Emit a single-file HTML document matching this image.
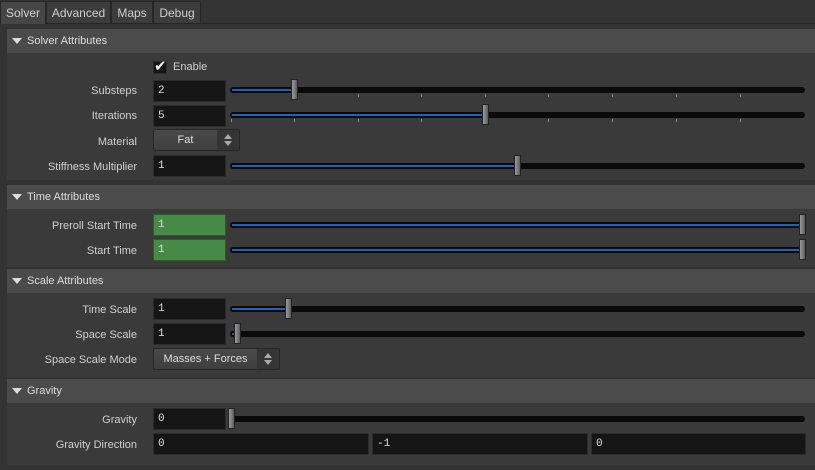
<!DOCTYPE html><html><head><style>
*{margin:0;padding:0;box-sizing:border-box}
body{width:815px;height:470px;background:#333;font-family:"Liberation Sans","DejaVu Sans",sans-serif;font-size:11px;color:#d0d0d0;position:relative;overflow:hidden}
.a{position:absolute}
.tab{position:absolute;top:1px;height:22px;background:#3c3c3c;border:1px solid #262626;border-bottom:none;line-height:22px;text-align:center;font-size:12px;color:#cfcfcf}
.hdr{position:absolute;left:7px;width:808px;height:24px;background:#4b4b4b;line-height:25px;padding-left:20px;font-size:11px;color:#ddd}
.hdr:before{content:"";position:absolute;left:5px;top:9px;border-left:5px solid transparent;border-right:5px solid transparent;border-top:6px solid #ddd}
.body{position:absolute;left:7px;width:808px;background:#3a3a3a}
.lbl{position:absolute;width:130px;left:7px;text-align:right;height:14px;line-height:16px}
.fld{position:absolute;left:153px;width:73px;height:22px;background:#151515;border:1px solid #2b2b2b;line-height:21px;padding-left:4px;font-family:"Liberation Mono","DejaVu Sans Mono",monospace;font-size:11px;color:#ddd}
.g{background:#478a47;border-color:#2e5a2e}
.trk{position:absolute;left:230px;width:575px;height:6px;background:#0a0a0a;border-radius:3px}
.fill{position:absolute;left:2px;top:2px;height:2px;background:#1f63b8}
.th{position:absolute;width:7px;height:21px;background:linear-gradient(90deg,#9a9a9a,#777 60%,#5a5a5a);border:1px solid #222}
.tick{position:absolute;width:1px;height:3px;background:#888}
.menu{position:absolute;left:153px;height:22px;background:linear-gradient(#4a4a4a,#3e3e3e);border:1px solid #262626;border-radius:2px;line-height:21px;text-align:center;color:#ddd}
.arr{position:absolute;right:0;top:0;width:22px;height:20px;background:#353535}
.arr:before{content:"";position:absolute;left:7px;top:4px;border-left:4px solid transparent;border-right:4px solid transparent;border-bottom:5px solid #aaa}
.arr:after{content:"";position:absolute;left:7px;top:11px;border-left:4px solid transparent;border-right:4px solid transparent;border-top:5px solid #aaa}
</style></head><body>
<div class="a" style="left:0;top:23px;width:815px;height:1px;background:#262626"></div>
<div class="tab" style="left:0;width:46px;background:#464646;height:23px">Solver</div>
<div class="tab" style="left:46px;width:65px">Advanced</div>
<div class="tab" style="left:111px;width:42px">Maps</div>
<div class="tab" style="left:153px;width:48px">Debug</div>

<div class="hdr" style="top:29px">Solver Attributes</div>
<div class="body" style="top:53px;height:127px"></div>
<div class="hdr" style="top:185px">Time Attributes</div>
<div class="body" style="top:209px;height:58px"></div>
<div class="hdr" style="top:269px">Scale Attributes</div>
<div class="body" style="top:293px;height:84px"></div>
<div class="hdr" style="top:379px">Gravity</div>
<div class="body" style="top:403px;height:62px"></div>

<div class="a" style="left:153px;top:61px;width:14px;height:13px;background:#151515;border:1px solid #2b2b2b"></div>
<div class="a" style="left:154px;top:57px;font-size:15px;color:#eee;font-weight:bold">✔</div>
<div class="a" style="left:173px;top:61px">Enable</div>

<div class="lbl" style="top:83px">Substeps</div>
<div class="fld" style="top:80px">2</div>
<div class="trk" style="top:87px"><div class="fill" style="width:62px"></div></div>
<div class="th" style="left:291px;top:79px"></div>

<div class="lbl" style="top:108px">Iterations</div>
<div class="fld" style="top:105px">5</div>
<div class="trk" style="top:112px"><div class="fill" style="width:253px"></div></div>
<div class="th" style="left:482px;top:104px"></div>

<div class="tick" style="left:294px;top:94px"></div><div class="tick" style="left:358px;top:94px"></div><div class="tick" style="left:421px;top:94px"></div><div class="tick" style="left:485px;top:94px"></div><div class="tick" style="left:548px;top:94px"></div><div class="tick" style="left:612px;top:94px"></div><div class="tick" style="left:676px;top:94px"></div><div class="tick" style="left:740px;top:94px"></div>
<div class="tick" style="left:231px;top:119px"></div><div class="tick" style="left:294px;top:119px"></div><div class="tick" style="left:358px;top:119px"></div><div class="tick" style="left:421px;top:119px"></div><div class="tick" style="left:548px;top:119px"></div><div class="tick" style="left:612px;top:119px"></div><div class="tick" style="left:676px;top:119px"></div><div class="tick" style="left:740px;top:119px"></div>

<div class="lbl" style="top:134px">Material</div>
<div class="menu" style="top:129px;width:87px;padding-right:22px">Fat<div class="arr"></div></div>

<div class="lbl" style="top:159px">Stiffness Multiplier</div>
<div class="fld" style="top:155px">1</div>
<div class="trk" style="top:163px"><div class="fill" style="width:285px"></div></div>
<div class="th" style="left:514px;top:155px"></div>

<div class="lbl" style="top:218px">Preroll Start Time</div>
<div class="fld g" style="top:214px">1</div>
<div class="trk" style="top:222px"><div class="fill" style="width:570px"></div></div>
<div class="th" style="left:799px;top:214px"></div>

<div class="lbl" style="top:243px">Start Time</div>
<div class="fld g" style="top:239px">1</div>
<div class="trk" style="top:247px"><div class="fill" style="width:570px"></div></div>
<div class="th" style="left:799px;top:239px"></div>

<div class="lbl" style="top:302px">Time Scale</div>
<div class="fld" style="top:298px">1</div>
<div class="trk" style="top:306px"><div class="fill" style="width:56px"></div></div>
<div class="th" style="left:285px;top:298px"></div>

<div class="lbl" style="top:327px">Space Scale</div>
<div class="fld" style="top:323px">1</div>
<div class="trk" style="top:331px"><div class="fill" style="width:4px"></div></div>
<div class="th" style="left:234px;top:323px"></div>

<div class="lbl" style="top:352px">Space Scale Mode</div>
<div class="menu" style="top:348px;width:127px;padding-right:22px">Masses + Forces<div class="arr"></div></div>

<div class="lbl" style="top:412px">Gravity</div>
<div class="fld" style="top:408px">0</div>
<div class="trk" style="top:416px"></div>
<div class="th" style="left:228px;top:408px"></div>

<div class="lbl" style="top:437px">Gravity Direction</div>
<div class="fld" style="top:433px;width:216px">0</div>
<div class="fld" style="top:433px;left:372px;width:216px">-1</div>
<div class="fld" style="top:433px;left:591px;width:215px">0</div>
</body></html>
